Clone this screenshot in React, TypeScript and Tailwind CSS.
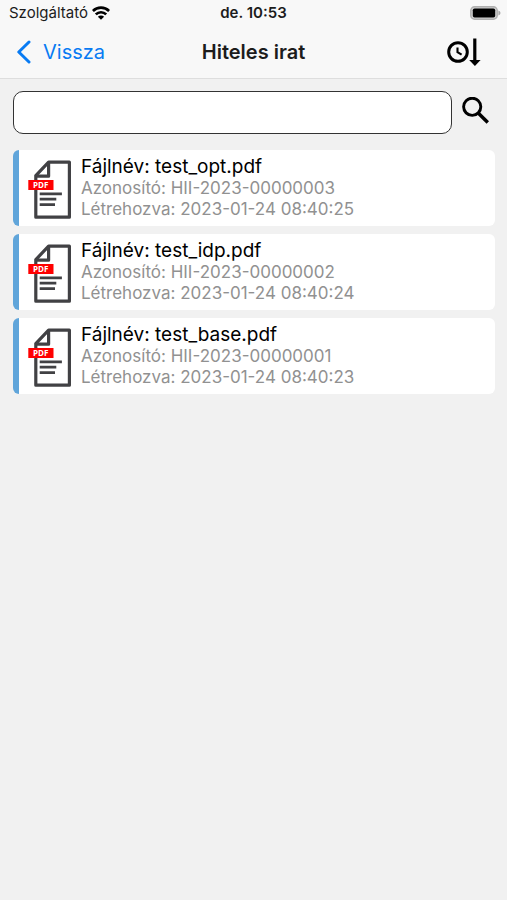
import { useState } from "react";

type DocumentItem = { id: string; fileName: string; createdAt: string };

const documents: DocumentItem[] = [
  { id: "HII-2023-00000003", fileName: "test_opt.pdf", createdAt: "2023-01-24 08:40:25" },
  { id: "HII-2023-00000002", fileName: "test_idp.pdf", createdAt: "2023-01-24 08:40:24" },
  { id: "HII-2023-00000001", fileName: "test_base.pdf", createdAt: "2023-01-24 08:40:23" },
];

function WifiIcon() {
  return (
    <svg viewBox="0 0 18 14" className="h-[14px] w-[18px]" aria-hidden="true">
      <g fill="none" stroke="#000" strokeWidth="2.7">
        <path d="M0.9 5a11.4 11.4 0 0 1 16.2 0" />
        <path d="M3.8 8.4a7.4 7.4 0 0 1 10.4 0" />
      </g>
      <path d="M5.9 10.7a4.4 4.4 0 0 1 6.2 0l-3.1 3.1z" />
    </svg>
  );
}

function BatteryIcon() {
  return (
    <svg viewBox="0 0 31 14" className="h-[14px] w-[31px]" aria-hidden="true">
      <rect x="0.8" y="0.8" width="26.4" height="12.4" rx="3.8" fill="#d0d0d0" stroke="#b0b0b0" strokeWidth="1.5" />
      <rect x="2.8" y="2.4" width="22.4" height="9.2" rx="1.8" />
      <path d="M28.4 4.6c2.7.8 2.7 4 0 4.8z" fill="#a8a8a8" />
    </svg>
  );
}

function SortByTimeIcon() {
  return (
    <svg viewBox="0 0 34 28" className="h-7 w-[34px]" aria-hidden="true">
      <g fill="none" stroke="#000">
        <circle cx="11" cy="14" r="9.3" strokeWidth="3" />
        <path d="M10.5 9.5v4.6l4.1 2.6" strokeWidth="2.1" />
        <path d="M27.8 0.5v22.5" strokeWidth="3.2" />
      </g>
      <path d="M22.2 22h11.4l-5.7 6z" />
    </svg>
  );
}

function SearchIcon() {
  return (
    <svg viewBox="0 0 27 27" className="h-[27px] w-[27px]" aria-hidden="true">
      <g fill="none" stroke="#000">
        <circle cx="10.2" cy="9.8" r="8.6" strokeWidth="2.9" />
        <path d="M16.2 15.9l9.6 9.6" strokeWidth="3.5" />
      </g>
    </svg>
  );
}

function PdfIcon() {
  return (
    <svg viewBox="0 0 44 62" className="h-[62px] w-11 shrink-0" aria-hidden="true">
      <g fill="none" stroke="#414144" strokeWidth="3.2" strokeLinejoin="round">
        <path d="M7.8 18.6L20.6 5.2H41.4V60.2H7.8z" />
        <path d="M20.6 5.4V19.2H8.2" />
        <path d="M11.7 36.8h22.2M11.7 42.2h16.6M11.7 47.7h15.3" strokeWidth="2.8" />
      </g>
      <rect x="0.3" y="23" width="25.2" height="10" fill="#f00" />
      <text x="5" y="30.9" fill="#fff" fontFamily="Open Sans, sans-serif" fontSize="8" fontWeight="700">
        PDF
      </text>
    </svg>
  );
}

function DocumentCard({ item }: { item: DocumentItem }) {
  return (
    <li className="flex h-19 items-center overflow-hidden rounded-md border-l-6 border-[#60a5da] bg-white pl-[9px]">
      <PdfIcon />
      <div className="min-w-0 pl-[9px]">
        <h2 className="truncate text-[19px] leading-[22px] text-black">Fájlnév: {item.fileName}</h2>
        <p className="truncate text-[17px] leading-[21px] text-[#919191]">Azonosító: {item.id}</p>
        <p className="truncate text-[17px] leading-[21px] text-[#919191]">Létrehozva: {item.createdAt}</p>
      </div>
    </li>
  );
}

export default function App() {
  const [query, setQuery] = useState("");
  const visible = documents.filter((item) => item.fileName.toLowerCase().includes(query.toLowerCase()));

  return (
    <div className="min-h-screen bg-[#f1f1f1] font-['Inter',sans-serif]">
      <header className="border-b border-[#dedede] bg-[#f8f8f8]">
        <div className="grid h-7 grid-cols-3 items-center px-[6px] pb-0.5 text-[15px] text-[#1c1c1c]">
          <span className="flex items-center gap-1 pl-[3px]">
            Szolgáltató
            <WifiIcon />
          </span>
          <span className="text-center font-semibold">de. 10:53</span>
          <span className="flex justify-end">
            <BatteryIcon />
          </span>
        </div>
        <div className="grid h-[50px] grid-cols-3 items-center px-4 pb-0.5">
          <button type="button" className="flex items-center gap-3 text-[20px] text-[#087bf3]">
            <svg viewBox="0 0 15 24" className="h-6 w-[15px]" aria-hidden="true">
              <path
                d="M13 2L2.8 12 13 22"
                fill="none"
                stroke="currentColor"
                strokeWidth="3"
                strokeLinecap="round"
                strokeLinejoin="round"
              />
            </svg>
            Vissza
          </button>
          <h1 className="whitespace-nowrap text-center text-[20px] font-semibold text-[#1c1c1c]">Hiteles irat</h1>
          <button type="button" aria-label="Rendezés idő szerint" className="justify-self-end pr-[10px]">
            <SortByTimeIcon />
          </button>
        </div>
      </header>

      <main className="px-3 pt-3">
        <form className="flex items-center gap-[10px] pl-px pr-[6px]" onSubmit={(e) => e.preventDefault()}>
          <input
            type="search"
            aria-label="Keresés"
            value={query}
            onChange={(e) => setQuery(e.target.value)}
            className="h-[43px] min-w-0 flex-1 rounded-[10px] border border-[#333] bg-white px-3 text-[17px] outline-none"
          />
          <button type="submit" aria-label="Keresés indítása" className="pb-1">
            <SearchIcon />
          </button>
        </form>
        <ul className="mt-4 flex flex-col gap-2 pl-px">
          {visible.map((item) => (
            <DocumentCard key={item.id} item={item} />
          ))}
        </ul>
      </main>
    </div>
  );
}
